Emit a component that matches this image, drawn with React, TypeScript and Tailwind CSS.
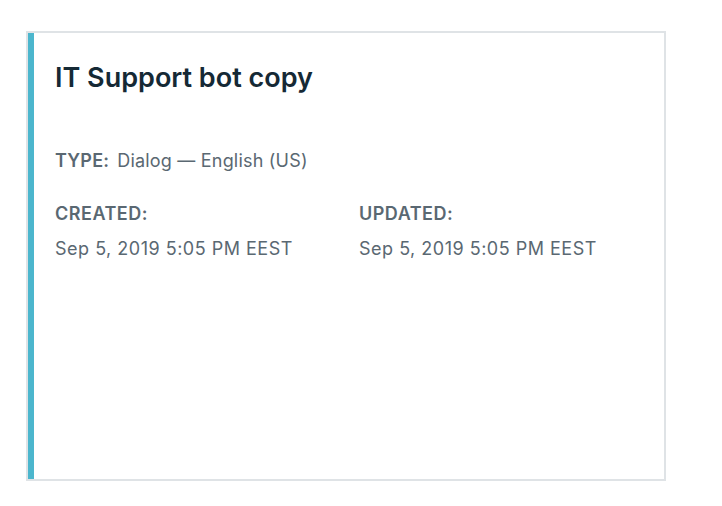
export default function App() {
  return (
    <div className="min-h-screen bg-white pt-[31px] pl-[26px] font-['Inter',sans-serif]">
      {/* Bot card */}
      <div className="flex w-[640px] h-[450px] border-2 border-[#dfe3e6] bg-white">
        <div className="w-[6px] bg-[#4cb6cd]" />
        <div className="flex-1 pl-[21px] pt-[29px]">
          <h2 className="text-[27px] leading-[32px] font-semibold text-[#152935]">IT Support bot copy</h2>

          <div className="mt-[55px] flex gap-[8px] text-[18px] leading-[24px] text-[#5a6872]">
            <span className="font-semibold tracking-[0.2px]">TYPE:</span>
            <span className="tracking-[0.2px]">Dialog — English (US)</span>
          </div>

          <div className="mt-[29px] grid grid-cols-[304px_1fr] text-[18px] leading-[24px] tracking-[0.5px] text-[#5a6872]">
            <div>
              <div className="font-semibold">CREATED:</div>
              <div className="mt-[11px]">Sep 5, 2019 5:05 PM EEST</div>
            </div>
            <div>
              <div className="font-semibold">UPDATED:</div>
              <div className="mt-[11px]">Sep 5, 2019 5:05 PM EEST</div>
            </div>
          </div>
        </div>
      </div>
    </div>
  )
}
